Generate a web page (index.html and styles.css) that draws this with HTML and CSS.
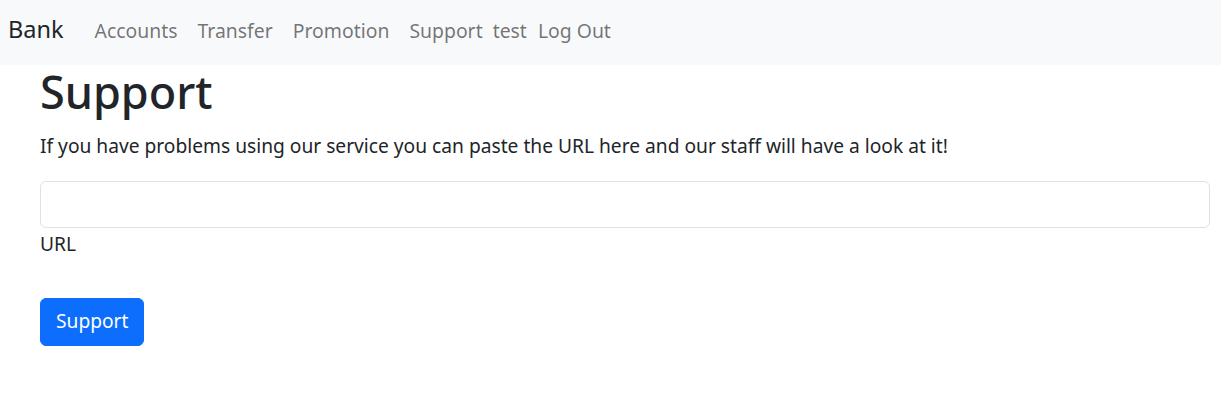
FILE: index.html
```html
<!DOCTYPE html>
<html lang="en">
<head>
<meta charset="utf-8">
<title>Support</title>
<link rel="stylesheet" href="styles.css">
</head>
<body>
<nav class="navbar">
  <a class="brand" href="#">Bank</a>
  <ul class="nav">
    <li><a class="nav-link" href="#">Accounts</a></li>
    <li><a class="nav-link" href="#">Transfer</a></li>
    <li><a class="nav-link" href="#">Promotion</a></li>
    <li><a class="nav-link" href="#">Support</a></li>
  </ul>
  <span class="user">test</span>
  <a class="logout" href="#">Log Out</a>
</nav>
<main class="container">
  <h1 class="title">Support</h1>
  <p class="lead-text">If you have problems using our service you can paste the URL here and our staff will have a look at it!</p>
  <form class="support-form">
    <input class="url-input" type="text" id="url">
    <label class="url-label" for="url">URL</label>
    <button class="btn-primary" type="button">Support</button>
  </form>
</main>
</body>
</html>
```
FILE: styles.css
```css
* { box-sizing: border-box; }
body {
  margin: 0;
  font-family: "Noto Sans", sans-serif;
  font-size: 19.2px;
  line-height: 1.5;
  color: #212529;
  background: #fff;
}
.navbar {
  display: flex;
  align-items: baseline;
  height: 65px;
  padding: 12px 8px 0;
  background: #f8f9fa;
}
.brand {
  font-size: 23.5px;
  color: #212529;
  text-decoration: none;
  margin-right: 21px;
}
.nav {
  display: flex;
  list-style: none;
  margin: 0;
  padding: 0;
}
.nav-link {
  display: block;
  padding: 0 10px;
  font-size: 19.4px;
  color: rgba(0,0,0,0.55);
  text-decoration: none;
}
.user, .logout {
  font-size: 19.4px;
  color: rgba(0,0,0,0.55);
  text-decoration: none;
  margin-right: 11px;
}
.container {
  padding: 0 11px 0 40px;
}
.title {
  margin: 0 0 13px;
  font-size: 45px;
  font-weight: 500;
  line-height: 1.2;
}
.lead-text {
  margin: 0 0 20px;
}
.support-form {
  display: flex;
  flex-direction: column;
  align-items: flex-start;
}
.url-input {
  width: 100%;
  height: 47px;
  border: 1px solid #dee2e6;
  border-radius: 6px;
  font: inherit;
  padding: 6px 14px;
}
.url-label {
  padding-top: 2px;
  margin-bottom: 39px;
}
.btn-primary {
  font: inherit;
  line-height: 1.5;
  padding: 8.6px 15px;
  border: 1px solid #0d6efd;
  border-radius: 6px;
  background: #0d6efd;
  color: #fff;
}
```
